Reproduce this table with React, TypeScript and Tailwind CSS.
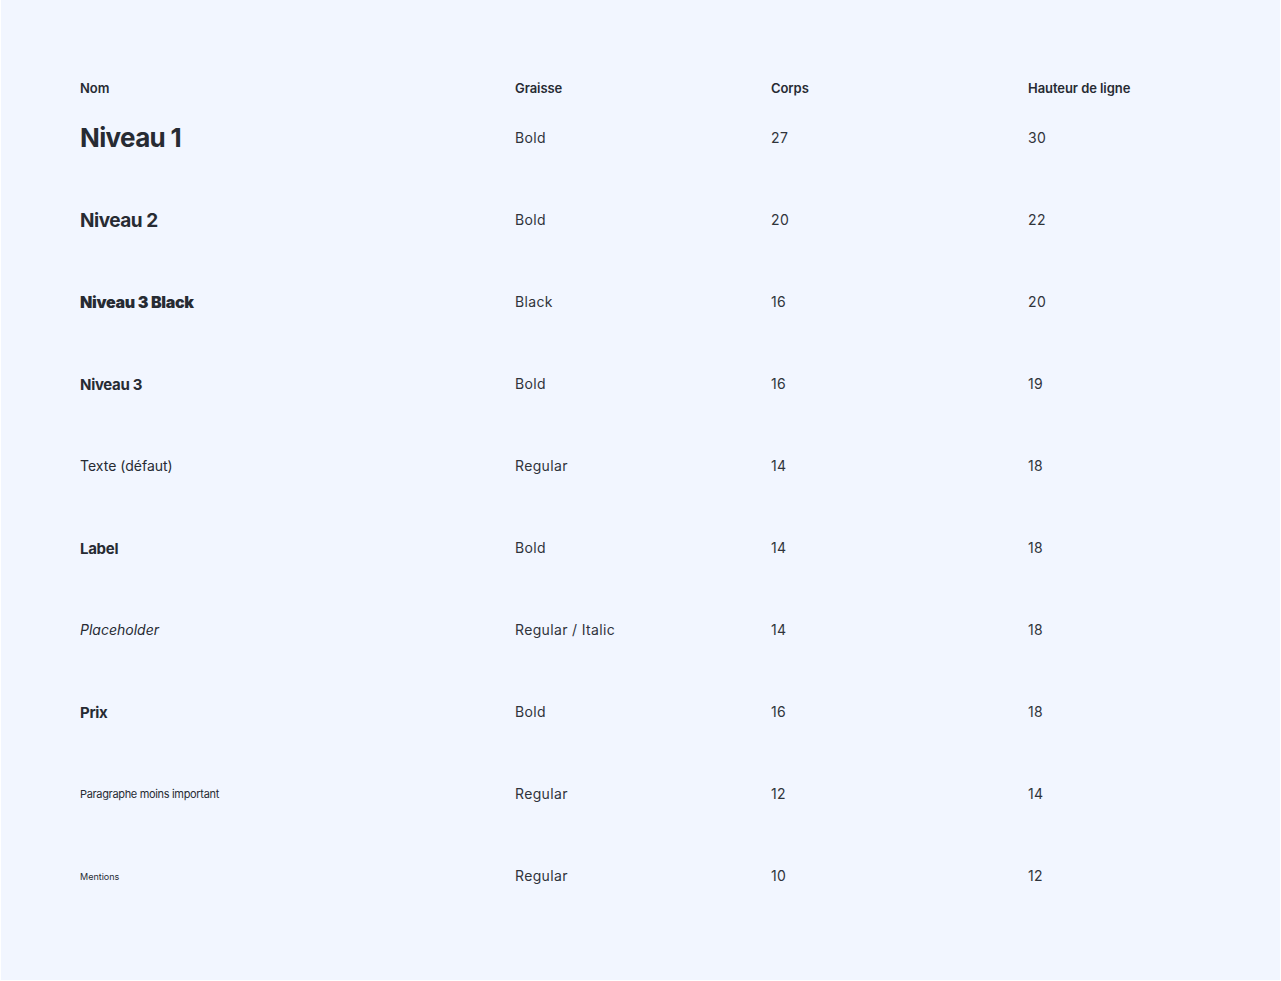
import React from "react";

type Row = {
  name: string;
  nameClass: string;
  weight: string;
  size: number;
  lineHeight: number;
};

const rows: Row[] = [
  { name: "Niveau 1", nameClass: "text-[26px] font-bold tracking-[-0.025em]", weight: "Bold", size: 27, lineHeight: 30 },
  { name: "Niveau 2", nameClass: "text-[19px] font-bold tracking-[-0.025em]", weight: "Bold", size: 20, lineHeight: 22 },
  { name: "Niveau 3 Black", nameClass: "text-[16px] font-black tracking-[-0.02em]", weight: "Black", size: 16, lineHeight: 20 },
  { name: "Niveau 3", nameClass: "text-[15px] font-bold tracking-[-0.02em]", weight: "Bold", size: 16, lineHeight: 19 },
  { name: "Texte (défaut)", nameClass: "text-[14px] font-normal", weight: "Regular", size: 14, lineHeight: 18 },
  { name: "Label", nameClass: "text-[15px] font-bold tracking-[-0.02em]", weight: "Bold", size: 14, lineHeight: 18 },
  { name: "Placeholder", nameClass: "text-[14px] font-normal italic", weight: "Regular / Italic", size: 14, lineHeight: 18 },
  { name: "Prix", nameClass: "text-[15px] font-bold tracking-[-0.02em]", weight: "Bold", size: 16, lineHeight: 18 },
  { name: "Paragraphe moins important", nameClass: "text-[11px] font-normal tracking-[-0.03em]", weight: "Regular", size: 12, lineHeight: 14 },
  { name: "Mentions", nameClass: "text-[9px] font-normal", weight: "Regular", size: 10, lineHeight: 12 },
];

const cols = "grid grid-cols-[435px_256px_257px_1fr]";

export default function App() {
  return (
    <div className="min-h-[981px] w-full bg-white">
      <div className="ml-px h-[980px] w-[1279px] bg-[#f2f6ff] pl-[79px] pt-[79px] font-['Inter',sans-serif] text-[#272b33]">
        {/* header */}
        <div className={`${cols} h-[18px] items-center text-[13px] font-semibold tracking-[-0.005em]`}>
          <div>Nom</div>
          <div>Graisse</div>
          <div>Corps</div>
          <div>Hauteur de ligne</div>
        </div>

        {rows.map((row) => (
          <div key={row.name} className={`${cols} h-[82px] items-center`}>
            <div className={`${row.nameClass} leading-none`}>{row.name}</div>
            <div className="text-[14px] leading-none tracking-[0.025em] text-[#30343b]">{row.weight}</div>
            <div className="text-[14px] leading-none tracking-[0.025em] text-[#30343b]">{row.size}</div>
            <div className="text-[14px] leading-none tracking-[0.025em] text-[#30343b]">{row.lineHeight}</div>
          </div>
        ))}
      </div>
    </div>
  );
}
